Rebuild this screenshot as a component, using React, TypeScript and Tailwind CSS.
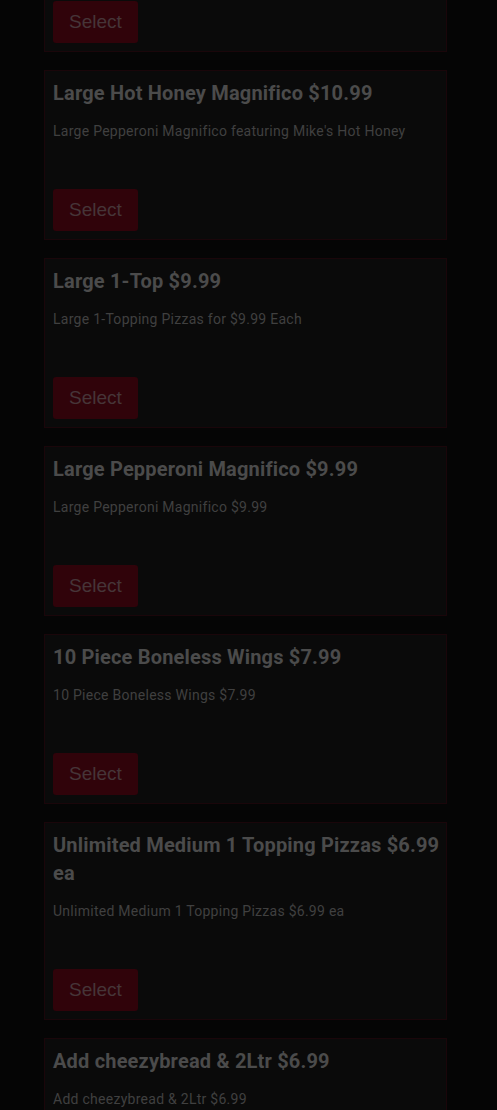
const deals = [
  {
    title: 'Large Hot Honey Magnifico $10.99',
    desc: "Large Pepperoni Magnifico featuring Mike's Hot Honey",
  },
  { title: 'Large 1-Top $9.99', desc: 'Large 1-Topping Pizzas for $9.99 Each' },
  { title: 'Large Pepperoni Magnifico $9.99', desc: 'Large Pepperoni Magnifico $9.99' },
  { title: '10 Piece Boneless Wings $7.99', desc: '10 Piece Boneless Wings $7.99' },
  {
    title: 'Unlimited Medium 1 Topping Pizzas $6.99 ea',
    desc: 'Unlimited Medium 1 Topping Pizzas $6.99 ea',
  },
  { title: 'Add cheezybread & 2Ltr $6.99', desc: 'Add cheezybread & 2Ltr $6.99' },
]

function DealCard({ title, desc }: { title: string; desc: string }) {
  return (
    <div className="border border-[#1a060a] bg-[#0a0a0a] py-2 pl-2 pr-1">
      <h3 className="font-['Roboto',sans-serif] text-[20px] font-bold leading-[28px] tracking-[0.18px] text-[#4b4b4b]">
        {title}
      </h3>
      <p className="mt-[14px] font-['Roboto',sans-serif] text-[14px] leading-[20px] tracking-[0.27px] text-[#404040]">
        {desc}
      </p>
      <button className="mt-[48px] h-[42px] rounded-[3px] bg-[#30030a] px-4 font-['Liberation_Sans',sans-serif] text-[19px] text-[#463538]">
        Select
      </button>
    </div>
  )
}

export default function App() {
  return (
    <div className="h-[1110px] overflow-hidden bg-[#050505]">
      <div className="-mt-[118px] ml-[44px] mr-[50px] flex flex-col gap-[18px]">
        <DealCard title="Large Pepperoni Magnifico $11.99" desc="Large Pepperoni Magnifico" />
        {deals.map((d) => (
          <DealCard key={d.title} title={d.title} desc={d.desc} />
        ))}
      </div>
    </div>
  )
}
